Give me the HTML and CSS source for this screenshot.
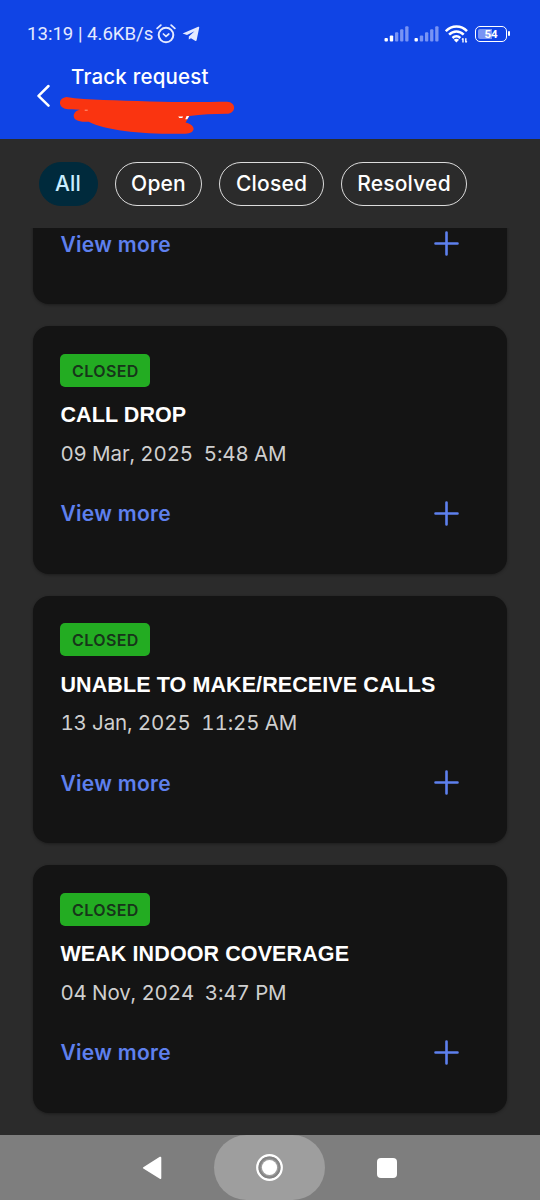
FILE: index.html
```
<!DOCTYPE html>
<html lang="en">
<head>
  <meta charset="UTF-8">
  <meta name="viewport" content="width=device-width, initial-scale=1.0">
  <link rel="stylesheet" href="styles.css">
  <title>Track request</title>
</head>
<body>

<header class="header">
  <div class="status-bar">
    <span class="status-text">13:19 | 4.6KB/s</span>
    <svg class="alarm" width="20" height="20" viewBox="0 0 20 20" fill="none" stroke="#e4eaff" stroke-linecap="round">
      <circle cx="10" cy="11" r="7.3" stroke-width="2"/>
      <path d="M1.2 4.4 4.8 1.2M18.8 4.4 15.2 1.2" stroke-width="1.8"/>
      <path d="M7.4 10 10 12.4 12.8 10" stroke-width="1.7"/>
    </svg>
    <svg class="telegram" width="18" height="16" viewBox="0 0 18 16" fill="#e4eaff">
      <path d="M.6 7.6 16.2.8c.8-.3 1.2.1 1 .9l-2.6 12.500c-.2.9-.8 1-1.5.5L9 12.200 6.800 13.400 6.800 10.400 12.500 5.200 5 8.900z"/>
    </svg>
    <div class="status-icons">
      <svg class="signal" width="25" height="16" viewBox="0 0 25 16" fill="#7894f4">
        <rect x=".5" y="12" width="3.4" height="3.5" rx="1" fill="#fff"/>
        <rect x="5.8" y="9.4" width="3.4" height="6.1" rx="1" fill="#fff"/>
        <rect x="11" y="6.3" width="3.3" height="9.2" rx="1"/>
        <rect x="16.1" y="3.3" width="3.3" height="12.2" rx="1"/>
        <rect x="21.2" y=".3" width="3.3" height="15.2" rx="1"/>
      </svg>
      <svg class="signal" width="25" height="16" viewBox="0 0 25 16" fill="#7894f4">
        <rect x=".5" y="12" width="3.4" height="3.5" rx="1" fill="#fff"/>
        <rect x="5.8" y="9.4" width="3.4" height="6.1" rx="1"/>
        <rect x="11" y="6.3" width="3.3" height="9.2" rx="1"/>
        <rect x="16.1" y="3.3" width="3.3" height="12.2" rx="1"/>
        <rect x="21.2" y=".3" width="3.3" height="15.2" rx="1"/>
      </svg>
      <svg class="wifi" width="23" height="18" viewBox="0 0 23 18" fill="none" stroke="#fff" stroke-width="2.5">
        <path d="M.8 6.2c6-6.2 15.4-6.2 21.2 0M4.1 9.7c4.2-4.2 10.4-4.2 14.6 0M7.5 13c2.3-2.2 5.5-2.2 7.8 0"/>
        <path d="M8.7 14.7 11.4 17.4 14.1 14.7Q11.4 12.8 8.7 14.7z" fill="#fff" stroke="none"/>
        <path d="M18 13.2v4.4M17 14.6l1-1.2M20.8 13.2v4.4M21.8 16.2l-1 1.2" stroke-width="1.4"/>
      </svg>
      <div class="battery"><span>54</span></div>
    </div>
  </div>
  <div class="title-bar">
    <svg class="back" width="14" height="24" viewBox="0 0 14 24" fill="none" stroke="#fff" stroke-width="2.5" stroke-linecap="round" stroke-linejoin="round">
      <path d="M12.5 2 2.5 11.800 12.500 21.600"/>
    </svg>
    <h1>Track request</h1>
  </div>
  <svg class="scribble" width="176" height="38" viewBox="0 0 178 38" preserveAspectRatio="none" fill="#fa3410">
    <path d="M6.5 0C28 3.5 57 3 91 4.5C122 5.3 148 5 169 4.8C178.5 5 178.500 16.500 168.500 16.700C155 17 143 17 131 19L127 25.500C139 28.500 136.500 36.700 127 36.700C88 37.500 47 34 29 24.700C17 25.500 13 22 14 17.500C15 14.500 18 13 20 12.800C14 12.200 9 12.500 5 11.700C-2 10 -2 1 6.500 0Z"/>
    <path d="M119.5 19.5h5l-.8 1.5h-3zM128 19h2.7l-2 3.3h-2z" fill="#fff"/>
    <path d="M25 12.7h3v1h-3z" fill="#ff9c84"/>
  </svg>
</header>

<nav class="filters">
  <button class="chip active">All</button>
  <button class="chip">Open</button>
  <button class="chip">Closed</button>
  <button class="chip">Resolved</button>
</nav>

<main class="requests">
  <article class="card">
    <div class="card-footer">
      <a>View more</a>
      <svg class="plus" width="26" height="26" viewBox="0 0 26 26"><path d="M13.5 1.5v22M2.5 12.5h22"/></svg>
    </div>
  </article>

  <article class="card">
    <span class="badge">CLOSED</span>
    <h2>CALL DROP</h2>
    <p class="date">09 Mar, 2025&nbsp; 5:48 AM</p>
    <div class="card-footer">
      <a>View more</a>
      <svg class="plus" width="26" height="26" viewBox="0 0 26 26"><path d="M13.5 1.5v22M2.5 12.5h22"/></svg>
    </div>
  </article>

  <article class="card">
    <span class="badge">CLOSED</span>
    <h2>UNABLE TO MAKE/RECEIVE CALLS</h2>
    <p class="date">13 Jan, 2025&nbsp; 11:25 AM</p>
    <div class="card-footer">
      <a>View more</a>
      <svg class="plus" width="26" height="26" viewBox="0 0 26 26"><path d="M13.5 1.5v22M2.5 12.5h22"/></svg>
    </div>
  </article>

  <article class="card">
    <span class="badge">CLOSED</span>
    <h2>WEAK INDOOR COVERAGE</h2>
    <p class="date">04 Nov, 2024&nbsp; 3:47 PM</p>
    <div class="card-footer">
      <a>View more</a>
      <svg class="plus" width="26" height="26" viewBox="0 0 26 26"><path d="M13.5 1.5v22M2.5 12.5h22"/></svg>
    </div>
  </article>
</main>

<footer class="nav-bar">
  <svg width="20" height="24" viewBox="0 0 20 24" fill="#fff">
    <path d="M1.3 11.2 17.8.8q1.5-.6 1.5 1v20.2q0 1.6-1.5.8L1.300 12.600q-1-.7 0-1.400z"/>
  </svg>
  <div class="home">
    <svg width="28" height="28" viewBox="0 0 28 28">
      <circle cx="13.5" cy="13.5" r="12.2" fill="none" stroke="#fff" stroke-width="2.4"/>
      <circle cx="13.5" cy="13.5" r="11" fill="#858585"/>
      <circle cx="13.5" cy="13.5" r="9" fill="#9e9e9e"/>
      <circle cx="13.5" cy="13.5" r="7.6" fill="#fff"/>
    </svg>
  </div>
  <div class="recents"></div>
</footer>

</body>
</html>
```

FILE: styles.css
```
* {
  box-sizing: border-box;
}

body {
  margin: 0;
  width: 540px;
  height: 1200px;
  display: flex;
  flex-direction: column;
  overflow: hidden;
  background-color: #2b2b2b;
  color: #fff;
  font-family: 'Inter', 'Liberation Sans', sans-serif;
}

.header {
  position: relative;
  height: 139px;
  flex-shrink: 0;
  background-color: #1044e5;
}

.status-bar {
  display: flex;
  align-items: center;
  height: 44px;
  padding: 23px 33px 0 27px;
  color: #e4eaff;
  font-family: 'Roboto', sans-serif;
  font-size: 18.6px;
}

.status-text {
  width: 129px;
  white-space: nowrap;
}

.telegram {
  margin-left: 6px;
}

.status-icons {
  display: flex;
  align-items: center;
  margin-left: auto;
}

.signal {
  margin-right: 5px;
}

.wifi {
  margin: 0 7px 0 1px;
}

.battery {
  position: relative;
  width: 32px;
  height: 16px;
  border: 1.5px solid #fff;
  border-radius: 5px;
  background: linear-gradient(90deg, #7894f4 54%, transparent 54%) content-box;
  padding: 2px;
}

.battery span {
  position: absolute;
  inset: 0;
  color: #fff;
  font-size: 11.5px;
  font-weight: 700;
  line-height: 14px;
  text-align: center;
}

.battery::after {
  content: '';
  position: absolute;
  right: -4px;
  top: 4px;
  width: 2px;
  height: 5px;
  border-radius: 1px;
  background-color: #fff;
}

.title-bar {
  display: flex;
  padding: 20px 0 0 36px;
}

.back {
  margin: 20px 21px 0 0;
}

h1 {
  margin: 0;
  font-size: 20.5px;
  font-weight: 500;
  letter-spacing: 0.2px;
  line-height: 26px;
}

/* marker strokes over the request number */
.scribble {
  position: absolute;
  left: 60px;
  top: 96.5px;
}

.filters {
  display: flex;
  gap: 17px;
  height: 88.5px;
  flex-shrink: 0;
  padding: 22.5px 38.5px 0;
}

.chip {
  height: 44px;
  padding: 0 15.5px;
  border: 1.3px solid #dcdcdc;
  border-radius: 22px;
  background: none;
  color: #fff;
  font-family: inherit;
  font-size: 21px;
  font-weight: 550;
  letter-spacing: 0.2px;
  white-space: nowrap;
}

.chip.active {
  border-color: #002a3c;
  background-color: #002a3c;
  color: #c8eeff;
}

/* list is scrolled to the end, first card is cut off */
.requests {
  flex: 1;
  min-height: 0;
  display: flex;
  flex-direction: column;
  justify-content: flex-end;
  gap: 22px;
  overflow: hidden;
  padding: 0 33px 22.5px;
}

.card {
  flex-shrink: 0;
  height: 247.5px;
  display: flex;
  flex-direction: column;
  align-items: flex-start;
  padding: 27.5px 27px 48px 27.4px;
  border-radius: 16px;
  background-color: #141414;
  box-shadow: 0 1px 3px rgba(0, 0, 0, 0.35);
}

.badge {
  width: 90px;
  height: 33px;
  border-radius: 5px;
  background-color: #23ac22;
  color: #17351a;
  font-size: 16px;
  font-weight: 600;
  letter-spacing: 0.4px;
  line-height: 34px;
  text-align: center;
}

h2 {
  margin: 16.5px 0 0;
  font-family: 'Liberation Sans', sans-serif;
  font-size: 21.5px;
  font-weight: 700;
  letter-spacing: 0.1px;
  line-height: 24px;
  white-space: nowrap;
}

.date {
  margin: 14.5px 0 0;
  color: #cfcfcf;
  font-size: 20.5px;
  font-variant-numeric: tabular-nums;
  letter-spacing: -0.12px;
  line-height: 24px;
}

.card-footer {
  display: flex;
  align-items: center;
  justify-content: space-between;
  width: 100%;
  height: 24px;
  margin-top: auto;
  padding-right: 21px;
}

.card-footer a {
  color: #5e80ee;
  font-size: 21px;
  font-weight: 600;
  letter-spacing: 0.3px;
}

.plus {
  fill: none;
  stroke: #5e80ee;
  stroke-width: 2.6;
  stroke-linecap: round;
}

.nav-bar {
  display: flex;
  align-items: center;
  height: 65px;
  flex-shrink: 0;
  padding-left: 142px;
  background-color: #7e7e7e;
}

.home {
  display: flex;
  align-items: center;
  justify-content: center;
  width: 111px;
  height: 65px;
  margin: 0 52px;
  border-radius: 33px;
  background-color: #9e9e9e;
}

.recents {
  width: 20px;
  height: 20px;
  border-radius: 4px;
  background-color: #fff;
}
```
